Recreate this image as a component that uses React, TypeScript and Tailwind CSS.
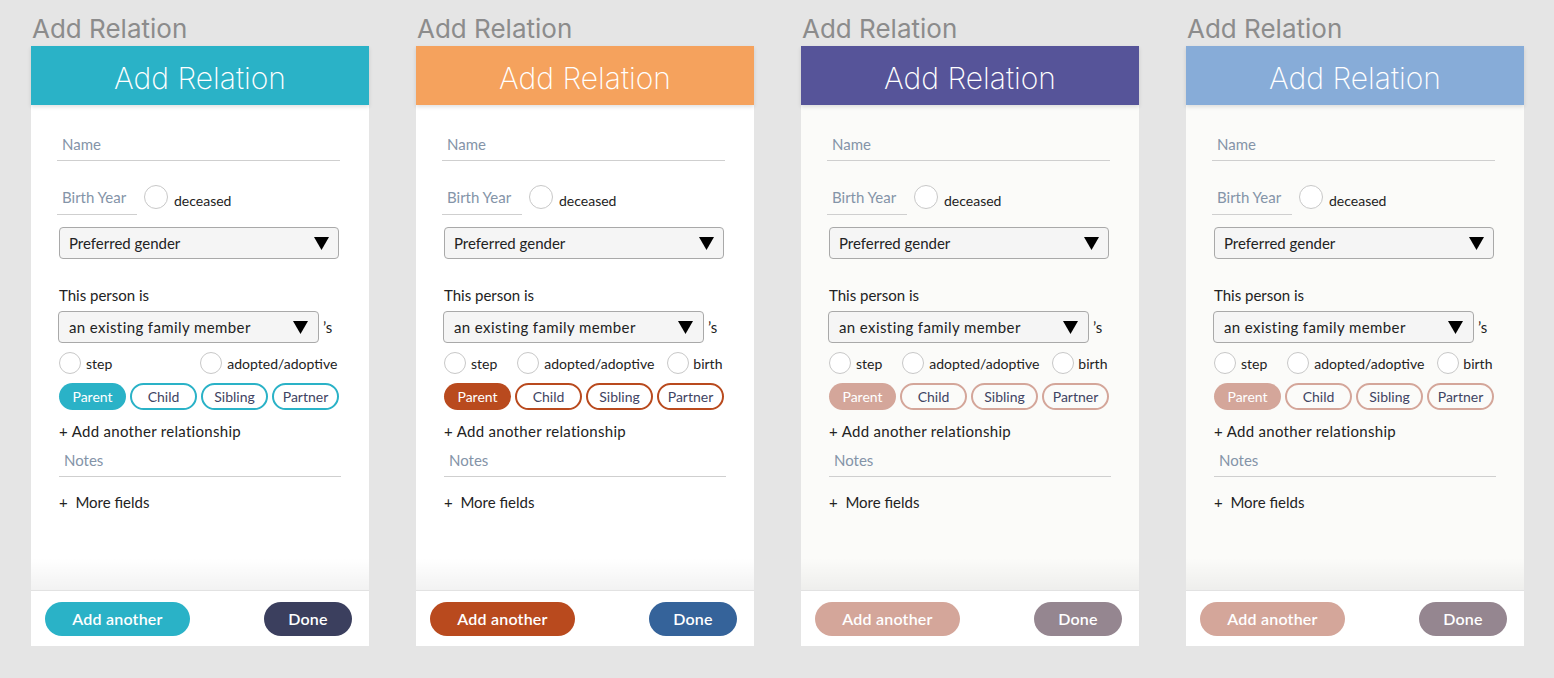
import React from "react";

type Theme = {
  header: string;
  pill: string;
  pillBorder: string;
  add: string;
  done: string;
  body: string;
  birth: boolean;
};

const themes: Theme[] = [
  { header: "bg-[#2ab2c7]", pill: "bg-[#2ab2c7]", pillBorder: "border-[#2ab2c7]", add: "bg-[#2ab2c7]", done: "bg-[#3b3f5e]", body: "bg-white", birth: false },
  { header: "bg-[#f5a25d]", pill: "bg-[#b94a1e]", pillBorder: "border-[#b94a1e]", add: "bg-[#b94a1e]", done: "bg-[#35639a]", body: "bg-white", birth: true },
  { header: "bg-[#565499]", pill: "bg-[#d4a69a]", pillBorder: "border-[#d4a69a]", add: "bg-[#d4a69a]", done: "bg-[#958690]", body: "bg-[#fbfbf9]", birth: true },
  { header: "bg-[#87acd8]", pill: "bg-[#d4a69a]", pillBorder: "border-[#d4a69a]", add: "bg-[#d4a69a]", done: "bg-[#958690]", body: "bg-[#fbfbf9]", birth: true },
];

const Radio = ({ size = 24 }: { size?: number }) => (
  <span
    className={`inline-block rounded-full border border-[#c8c8c8] bg-white shrink-0 ${size === 24 ? "w-[24px] h-[24px]" : "w-[22px] h-[22px]"}`}
  />
);

const Tri = () => (
  <svg width="15" height="13" viewBox="0 0 15 13" className="shrink-0">
    <polygon points="0,0 15,0 7.5,13" fill="#000" />
  </svg>
);

function Panel({ t }: { t: Theme }) {
  return (
    <div className="w-[338px] flex flex-col">
      <div className="h-[46px] pt-[13px] text-[26px] leading-[32px] text-[#8c8c8c] pl-[1px]" style={{ fontFamily: "Inter, 'Noto Sans', sans-serif" }}>
        Add Relation
      </div>
      <div className={`${t.header} h-[59px] pt-[5px] flex items-center justify-center text-white text-[30px] relative z-10 shadow-[0_2px_4px_rgba(0,0,0,0.12)]`} style={{ fontFamily: "Inter, Lato, sans-serif", fontWeight: 200 }}>
        Add Relation
      </div>
      <div className={`${t.body} h-[485px] relative flex flex-col pl-[26px] pr-[29px] text-[15px] text-[#222]`}>
        <div className="mt-[28px] h-[28px] border-b border-[#cfcfcf] pl-[5px] text-[#8494a8] leading-[22px]">Name</div>
        <div className="mt-[24px] flex items-center">
          <div className="w-[80px] h-[30px] border-b border-[#cfcfcf] pl-[5px] text-[#8494a8] leading-[24px]">Birth Year</div>
          <span className="ml-[7px] mt-[-1px]"><Radio /></span>
          <span className="ml-[6px] text-[14px]">deceased</span>
        </div>
        <div className="mt-[12px] ml-[2px] mr-[1px] h-[32px] rounded-[4px] border border-[#a9a9a9] bg-[#f5f5f5] flex items-center justify-between pl-[9px] pr-[9px]">
          <span>Preferred gender</span>
          <Tri />
        </div>
        <div className="mt-[26px] ml-[2px] leading-[20px]">This person is</div>
        <div className="mt-[6px] flex items-center">
          <div className="ml-[1px] w-[261px] h-[32px] rounded-[4px] border border-[#a9a9a9] bg-[#f5f5f5] flex items-center justify-between pl-[10px] pr-[10px]">
            <span className="tracking-[0.4px]">an existing family member</span>
            <Tri />
          </div>
          <span className="ml-[4px]">’s</span>
        </div>
        <div className="mt-[8px] flex items-center text-[14px] h-[24px]">
          <div className="flex items-center ml-[2px]">
            <Radio size={22} />
            <span className="ml-[5px]">step</span>
          </div>
          {t.birth ? (
            <>
              <div className="flex items-center ml-[20px]">
                <Radio size={22} />
                <span className="ml-[5px]">adopted/adoptive</span>
              </div>
              <div className="flex items-center ml-[13px]">
                <Radio size={22} />
                <span className="ml-[4px]">birth</span>
              </div>
            </>
          ) : (
            <div className="flex items-center ml-[88px]">
              <Radio size={22} />
              <span className="ml-[5px]">adopted/adoptive</span>
            </div>
          )}
        </div>
        <div className="mt-[8px] ml-[2px] flex gap-[4px] text-[14px]">
          <div className={`${t.pill} w-[67px] h-[27px] rounded-full flex items-center justify-center text-white`}>Parent</div>
          {["Child", "Sibling", "Partner"].map((l) => (
            <div key={l} className={`${t.pillBorder} border-2 w-[67px] h-[27px] rounded-full flex items-center justify-center text-[#3f4463]`}>{l}</div>
          ))}
        </div>
        <div className="mt-[11px] ml-[2px] leading-[20px] tracking-[0.3px]">+ Add another relationship</div>
        <div className="mt-[6px] ml-[2px] mr-[-1px] h-[30px] border-b border-[#cfcfcf] pl-[5px] text-[#8494a8] leading-[26px]">Notes</div>
        <div className="mt-[15px] ml-[2px] leading-[20px]">+&nbsp; More fields</div>
        <div className="absolute left-0 right-0 bottom-0 h-[32px] bg-gradient-to-b from-transparent to-[rgba(0,0,0,0.05)]" />
      </div>
      <div className="bg-white h-[56px] border-t border-[#e2e2e2] flex items-center justify-between pl-[14px] pr-[17px] text-[16px] font-semibold text-white tracking-[0.2px]">
        <div className={`${t.add} w-[145px] h-[34px] pt-[1px] rounded-full flex items-center justify-center`}>Add another</div>
        <div className={`${t.done} w-[88px] h-[34px] pt-[1px] rounded-full flex items-center justify-center`}>Done</div>
      </div>
    </div>
  );
}

export default function App() {
  return (
    <div className="w-[1554px] h-[678px] bg-[#e5e5e5] flex gap-[47px] pl-[31px]" style={{ fontFamily: "Lato, 'Open Sans', sans-serif" }}>
      {themes.map((t, i) => (
        <Panel key={i} t={t} />
      ))}
    </div>
  );
}
